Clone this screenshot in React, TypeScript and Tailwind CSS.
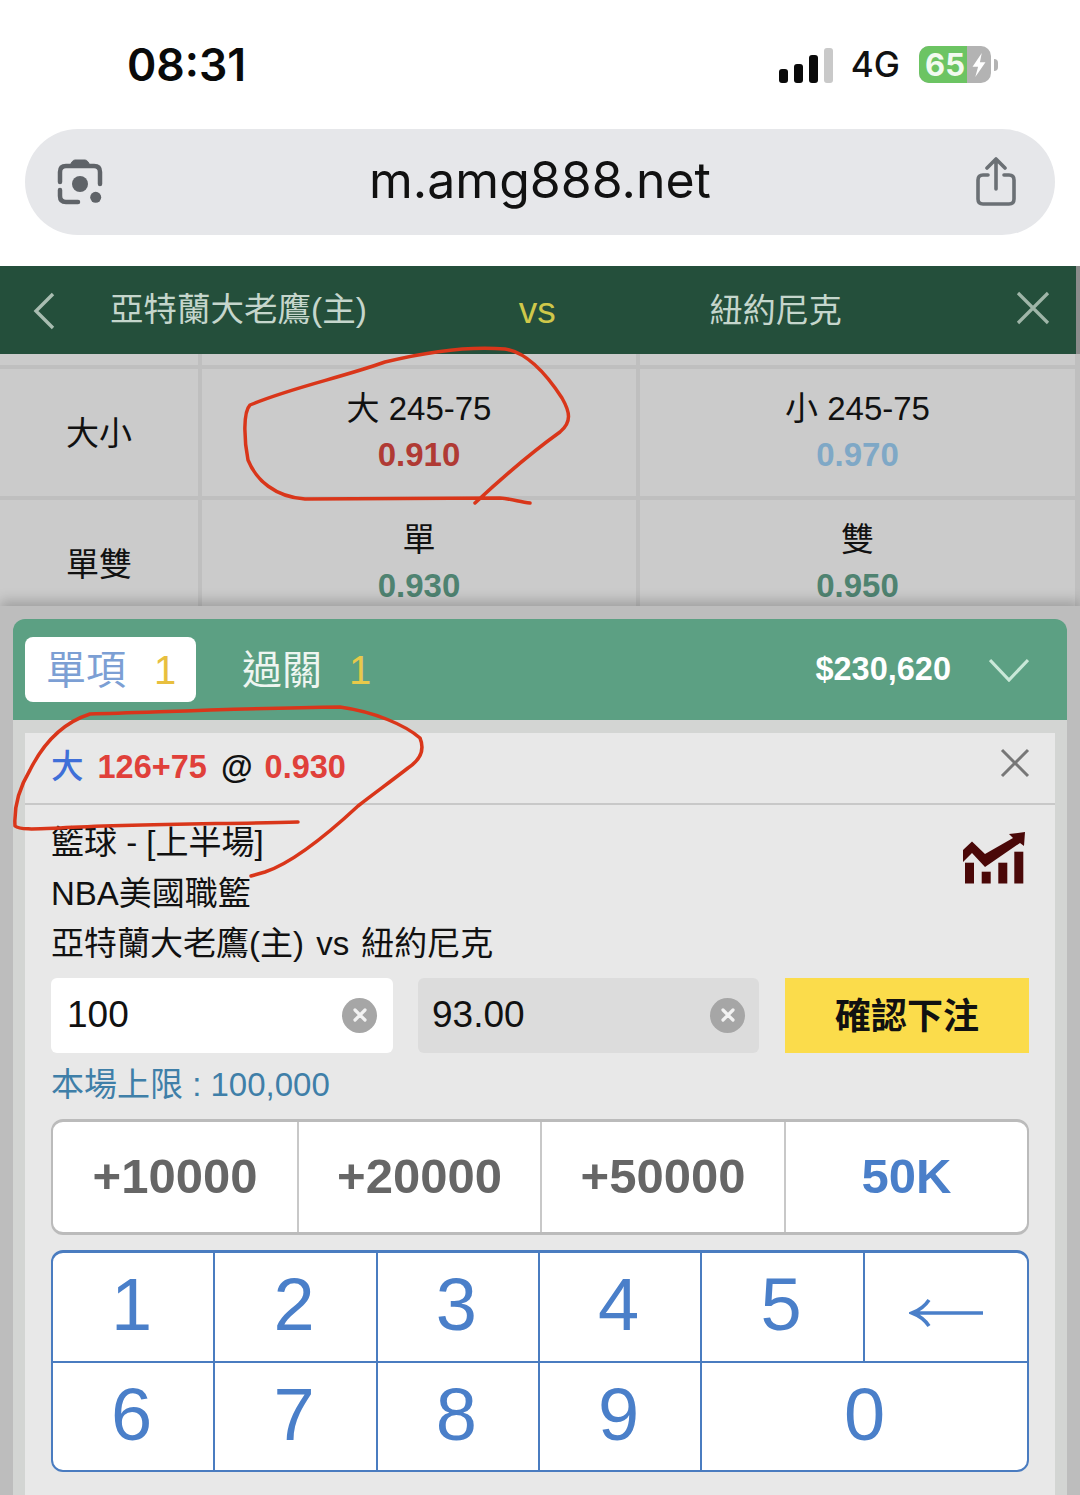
const cjk = "[font-family:'Liberation_Sans','Noto_Sans_CJK_TC',sans-serif]";

function OddsCell({ title, odds, color }: { title: string; odds: string; color: string }) {
  return (
    <div className="bg-[#cbcbcb] h-[127px] pt-[17px] flex flex-col items-center text-[33px] leading-[46px]">
      <div className="text-[#111]">{title}</div>
      <div className={`font-bold ${color}`}>{odds}</div>
    </div>
  );
}

function ClearDot() {
  return (
    <div className="w-[35px] h-[35px] rounded-full bg-[#a6a6a6] flex items-center justify-center">
      <svg viewBox="0 0 16 16" className="w-[16px] h-[16px]" stroke="#f2f2f2" strokeWidth="3.2" strokeLinecap="round">
        <path d="M3 3 L13 13 M13 3 L3 13" />
      </svg>
    </div>
  );
}

function Key({ label, wide, last, bottom }: { label: React.ReactNode; wide?: boolean; last?: boolean; bottom?: boolean }) {
  return (
    <div
      className={`flex items-center justify-center pb-[3px] text-[74px] leading-none text-[#4a7fc9] border-[#4a7cc0] ${wide ? "col-span-2" : ""} ${last ? "" : "border-r-2 pr-[3px]"} ${bottom ? "" : "border-b-2"}`}
    >
      {label}
    </div>
  );
}

export default function App() {
  return (
    <div className={`relative w-[1080px] h-[1495px] overflow-hidden bg-white ${cjk}`}>
      {/* status bar */}
      <div className="h-[129px] flex items-center pl-[127px] pr-[82px] [font-family:Inter,sans-serif]">
        <span className="mt-[2px] text-[44.5px] font-semibold text-[#0a0a0a] leading-none">08:31</span>
        <div className="ml-auto flex items-center">
          <div className="flex items-end gap-[6px] h-[35px] mt-[1px]">
            <div className="w-[9px] h-[14px] rounded-[3px] bg-[#0a0a0a]" />
            <div className="w-[9px] h-[19px] rounded-[3px] bg-[#0a0a0a]" />
            <div className="w-[9px] h-[28px] rounded-[3px] bg-[#0a0a0a]" />
            <div className="w-[9px] h-[35px] rounded-[3px] bg-[#c9c9c9]" />
          </div>
          <span className="ml-[18px] text-[35px] font-medium text-[#111] leading-none">4G</span>
          <div className="ml-[19px] flex items-center">
            <div className="relative w-[72px] h-[37px] rounded-[10px] bg-[#b3b3b3]">
              <div className="w-[48px] h-full rounded-l-[10px] bg-[#6cc463] flex items-center justify-end pr-[2px]">
                <span className="text-[31px] font-bold text-[#f2faf0] leading-none">65</span>
              </div>
              <svg viewBox="0 0 14 26" className="absolute left-[52px] top-[7px] w-[16px] h-[24px]" fill="#fff">
                <path d="M10 0 L0 15 H6 L3 26 L14 10 H8 Z" />
              </svg>
            </div>
            <div className="ml-[3px] w-[4px] h-[12px] rounded-r-full bg-[#b3b3b3]" />
          </div>
        </div>
      </div>

      {/* url bar */}
      <div className="mx-[25px] h-[106px] rounded-[53px] bg-[#e6e7ea] flex items-center justify-between pl-[32px] pr-[38px] relative">
        <svg viewBox="0 0 46 46" className="w-[46px] h-[46px]" fill="none" stroke="#5f6368" strokeWidth="4.5" strokeLinecap="round">
          <path d="M13 7 Q15 1 18 1 H28 Q31 1 33 7 Z" fill="#5f6368" strokeWidth="1" />
          <path d="M3 23 V13 Q3 7 9 7 H37 Q43 7 43 13 V25" />
          <path d="M3 31 V37 Q3 43 9 43 H21" />
          <circle cx="23" cy="25" r="8" fill="#5f6368" stroke="none" />
          <circle cx="38.7" cy="38.3" r="5.5" fill="#5f6368" stroke="none" />
        </svg>
        <span className="absolute left-0 right-0 text-center text-[50px] leading-none text-[#111] [font-family:Inter,sans-serif] -mt-[4px]">
          m.amg888.net
        </span>
        <svg viewBox="0 0 42 50" className="w-[42px] h-[50px]" fill="none" stroke="#6b7075" strokeWidth="3.6" strokeLinecap="round" strokeLinejoin="round">
          <path d="M21 32 V3 M12 11 L21 2 L30 11" />
          <path d="M13 18 H8 Q3 18 3 23 V42 Q3 47 8 47 H34 Q39 47 39 42 V23 Q39 18 34 18 H29" />
        </svg>
      </div>

      {/* match header */}
      <div className="mt-[31px] h-[88px] pt-[1px] bg-[#244f3b] border-r-[4px] border-[#8b8b8b] relative flex items-center text-[33.5px] text-[#c5d6cc]">
        <svg viewBox="0 0 22 38" className="ml-[33px] w-[22px] h-[38px]" fill="none" stroke="#a9bdb1" strokeWidth="3.4">
          <path d="M20 2 L3 19 L20 36" />
        </svg>
        <span className="ml-[55px]">亞特蘭大老鷹(主)</span>
        <span className="ml-[152px] text-[37px] text-[#cfc84a]">vs</span>
        <span className="ml-[154px] text-[33px]">紐約尼克</span>
        <svg viewBox="0 0 34 34" className="absolute left-[1016px] top-[25px] w-[34px] h-[34px]" fill="none" stroke="#9fb5a8" strokeWidth="3.2">
          <path d="M2 2 L32 32 M32 2 L2 32" />
        </svg>
      </div>

      {/* odds table */}
      <div className="relative h-[252px] overflow-hidden bg-[#bfbfbf] pr-[5px]">
        <div className="grid grid-cols-[198px_434px_1fr] gap-[4px]">
          <div className="bg-[#cbcbcb] h-[11px]" />
          <div className="bg-[#cbcbcb] h-[11px]" />
          <div className="bg-[#cbcbcb] h-[11px]" />
          <div className="bg-[#cbcbcb] h-[127px] pt-[2px] flex items-center justify-center text-[33px] text-[#111]">大小</div>
          <OddsCell title="大 245-75" odds="0.910" color="text-[#b03a34]" />
          <OddsCell title="小 245-75" odds="0.970" color="text-[#7fa8c6]" />
          <div className="bg-[#cbcbcb] h-[127px] pt-[2px] flex items-center justify-center text-[33px] text-[#111]">單雙</div>
          <OddsCell title="單" odds="0.930" color="text-[#4f8371]" />
          <OddsCell title="雙" odds="0.950" color="text-[#4f8371]" />
        </div>
      </div>

      {/* bet slip */}
      <div className="relative h-[889px] bg-[#bdbdbd] pt-[13px] px-[13px] shadow-[0_-5px_12px_rgba(0,0,0,0.22)]">
        <div className="h-[101px] bg-[#5ca083] rounded-t-[12px] flex items-center pl-[12px] pr-[38px]">
          <div className="w-[171px] h-[65px] bg-white rounded-[8px] flex items-center pl-[21px] text-[40px] leading-none">
            <span className="text-[#7c9fd4]">單項</span>
            <span className="ml-[28px] text-[#e8bf3e]">1</span>
          </div>
          <span className="ml-[46px] text-[40px] leading-none text-[#eef5f0]">過關</span>
          <span className="ml-[27px] text-[40px] leading-none text-[#e8c94a]">1</span>
          <span className="ml-auto text-[32.5px] font-bold text-white leading-none">$230,620</span>
          <svg viewBox="0 0 40 24" className="ml-[38px] w-[40px] h-[24px]" fill="none" stroke="#c9e8d8" strokeWidth="3.2">
            <path d="M1 2 L20 22 L39 2" />
          </svg>
        </div>
        <div className="h-[775px] bg-[#d3d5d3] px-[12px] pt-[13px]">
          <div className="h-full bg-[#e8e8e8]">
            <div className="h-[72px] border-b-2 border-[#c8c8c8] flex items-center pl-[26px] pr-[25px] pb-[2px] text-[32.5px] font-bold leading-none">
              <span className="text-[#3f6fd8] font-medium">大</span>
              <span className="ml-[14px] text-[#e0403a]">126+75</span>
              <span className="ml-[14px] text-[#111]">@</span>
              <span className="ml-[12px] text-[#e0403a]">0.930</span>
              <svg viewBox="0 0 30 30" className="ml-auto -mt-[9px] w-[30px] h-[30px]" fill="none" stroke="#777" strokeWidth="3">
                <path d="M2 2 L28 28 M28 2 L2 28" />
              </svg>
            </div>

            <div className="relative pl-[26px] pt-[13px] text-[33px] leading-[50.5px] text-[#111]">
              <div>籃球 - [上半場]</div>
              <div>NBA美國職籃</div>
              <div className="[word-spacing:3px]">亞特蘭大老鷹(主) vs 紐約尼克</div>
              <svg viewBox="0 0 62 53" className="absolute left-[938px] top-[27px] w-[62px] h-[53px]" fill="#4a0808">
                <path d="M0 18 L9 9.5 L22 22 L50 6 L46 2 L62 0 L61 14 L57 11 L22 35 L9 21 L0 30 Z" />
                <rect x="2" y="30.7" width="9" height="20.8" />
                <rect x="18.7" y="39.7" width="9" height="11.8" />
                <rect x="35.3" y="30.7" width="9" height="20.8" />
                <rect x="51.3" y="19.7" width="9" height="31.8" />
              </svg>
            </div>

            <div className="mt-[8px] ml-[26px] flex h-[75px]">
              <div className="w-[342px] bg-white rounded-[6px] flex items-center justify-between pl-[16px] pr-[16px] text-[37px] text-[#111]">
                100
                <ClearDot />
              </div>
              <div className="ml-[25px] w-[341px] bg-[#dcdcdc] rounded-[6px] flex items-center justify-between pl-[14px] pr-[14px] text-[37px] text-[#111]">
                93.00
                <ClearDot />
              </div>
              <div className="ml-[26px] w-[244px] bg-[#fbdc4b] flex items-center justify-center pt-[3px] text-[36px] font-bold text-[#111]">
                確認下注
              </div>
            </div>

            <div className="ml-[26px] mt-[9px] h-[46px] text-[33px] leading-[46px] text-[#3f7fa8]">本場上限 : 100,000</div>

            <div className="ml-[26px] mt-[11px] w-[978px] h-[116px] bg-white rounded-[12px] border-2 border-t-[3px] border-b-[3px] border-[#bbbbbb] grid grid-cols-[246px_243px_244px_1fr] text-[49px] font-bold text-[#666]">
              <div className="flex items-center justify-center border-r-2 border-[#c8c8c8]">+10000</div>
              <div className="flex items-center justify-center border-r-2 border-[#c8c8c8]">+20000</div>
              <div className="flex items-center justify-center border-r-2 border-[#c8c8c8]">+50000</div>
              <div className="flex items-center justify-center text-[#4a7fc9]">50K</div>
            </div>

            <div className="ml-[26px] mt-[15px] w-[978px] h-[222px] bg-white rounded-[12px] border-2 border-t-[3px] border-[#4a7cc0] overflow-hidden grid grid-cols-6 grid-rows-[110px_1fr]">
              <Key label="1" />
              <Key label="2" />
              <Key label="3" />
              <Key label="4" />
              <Key label="5" />
              <Key
                last
                label={
                  <svg viewBox="0 0 74 28" className="w-[74px] h-[28px] mt-[15px]" fill="none" stroke="#4a7fc9" strokeWidth="3.6">
                    <path d="M3 14 H74 M20 1 Q14 10 3 14 Q14 18 20 27" />
                  </svg>
                }
              />
              <Key bottom label="6" />
              <Key bottom label="7" />
              <Key bottom label="8" />
              <Key bottom label="9" />
              <Key bottom last wide label="0" />
            </div>
          </div>
        </div>
      </div>

      {/* hand drawn circles on top of the screenshot */}
      <svg viewBox="0 0 1080 1495" className="absolute inset-0 w-[1080px] h-[1495px] pointer-events-none" fill="none" stroke="#d9361a" strokeWidth="3.5" strokeLinecap="round" strokeLinejoin="round">
        <path d="M475 503 C505 475 535 450 560 432 C572 422 570 412 562 398 C545 372 525 352 505 349 C470 346 430 351 385 362 C340 378 290 388 250 405 C243 412 244 440 248 460 C256 480 275 497 305 499 L500 498 C512 499 520 502 530 503" />
        <path d="M298 822 C220 824 130 824 60 828 C35 829 20 830 15 826 C14 810 18 790 30 770 C45 740 65 722 90 714 C160 712 250 708 340 707 C375 712 405 725 420 738 C425 750 420 760 408 768 C390 782 372 795 358 806 C330 832 295 862 265 872 L251 876" />
      </svg>
    </div>
  );
}
